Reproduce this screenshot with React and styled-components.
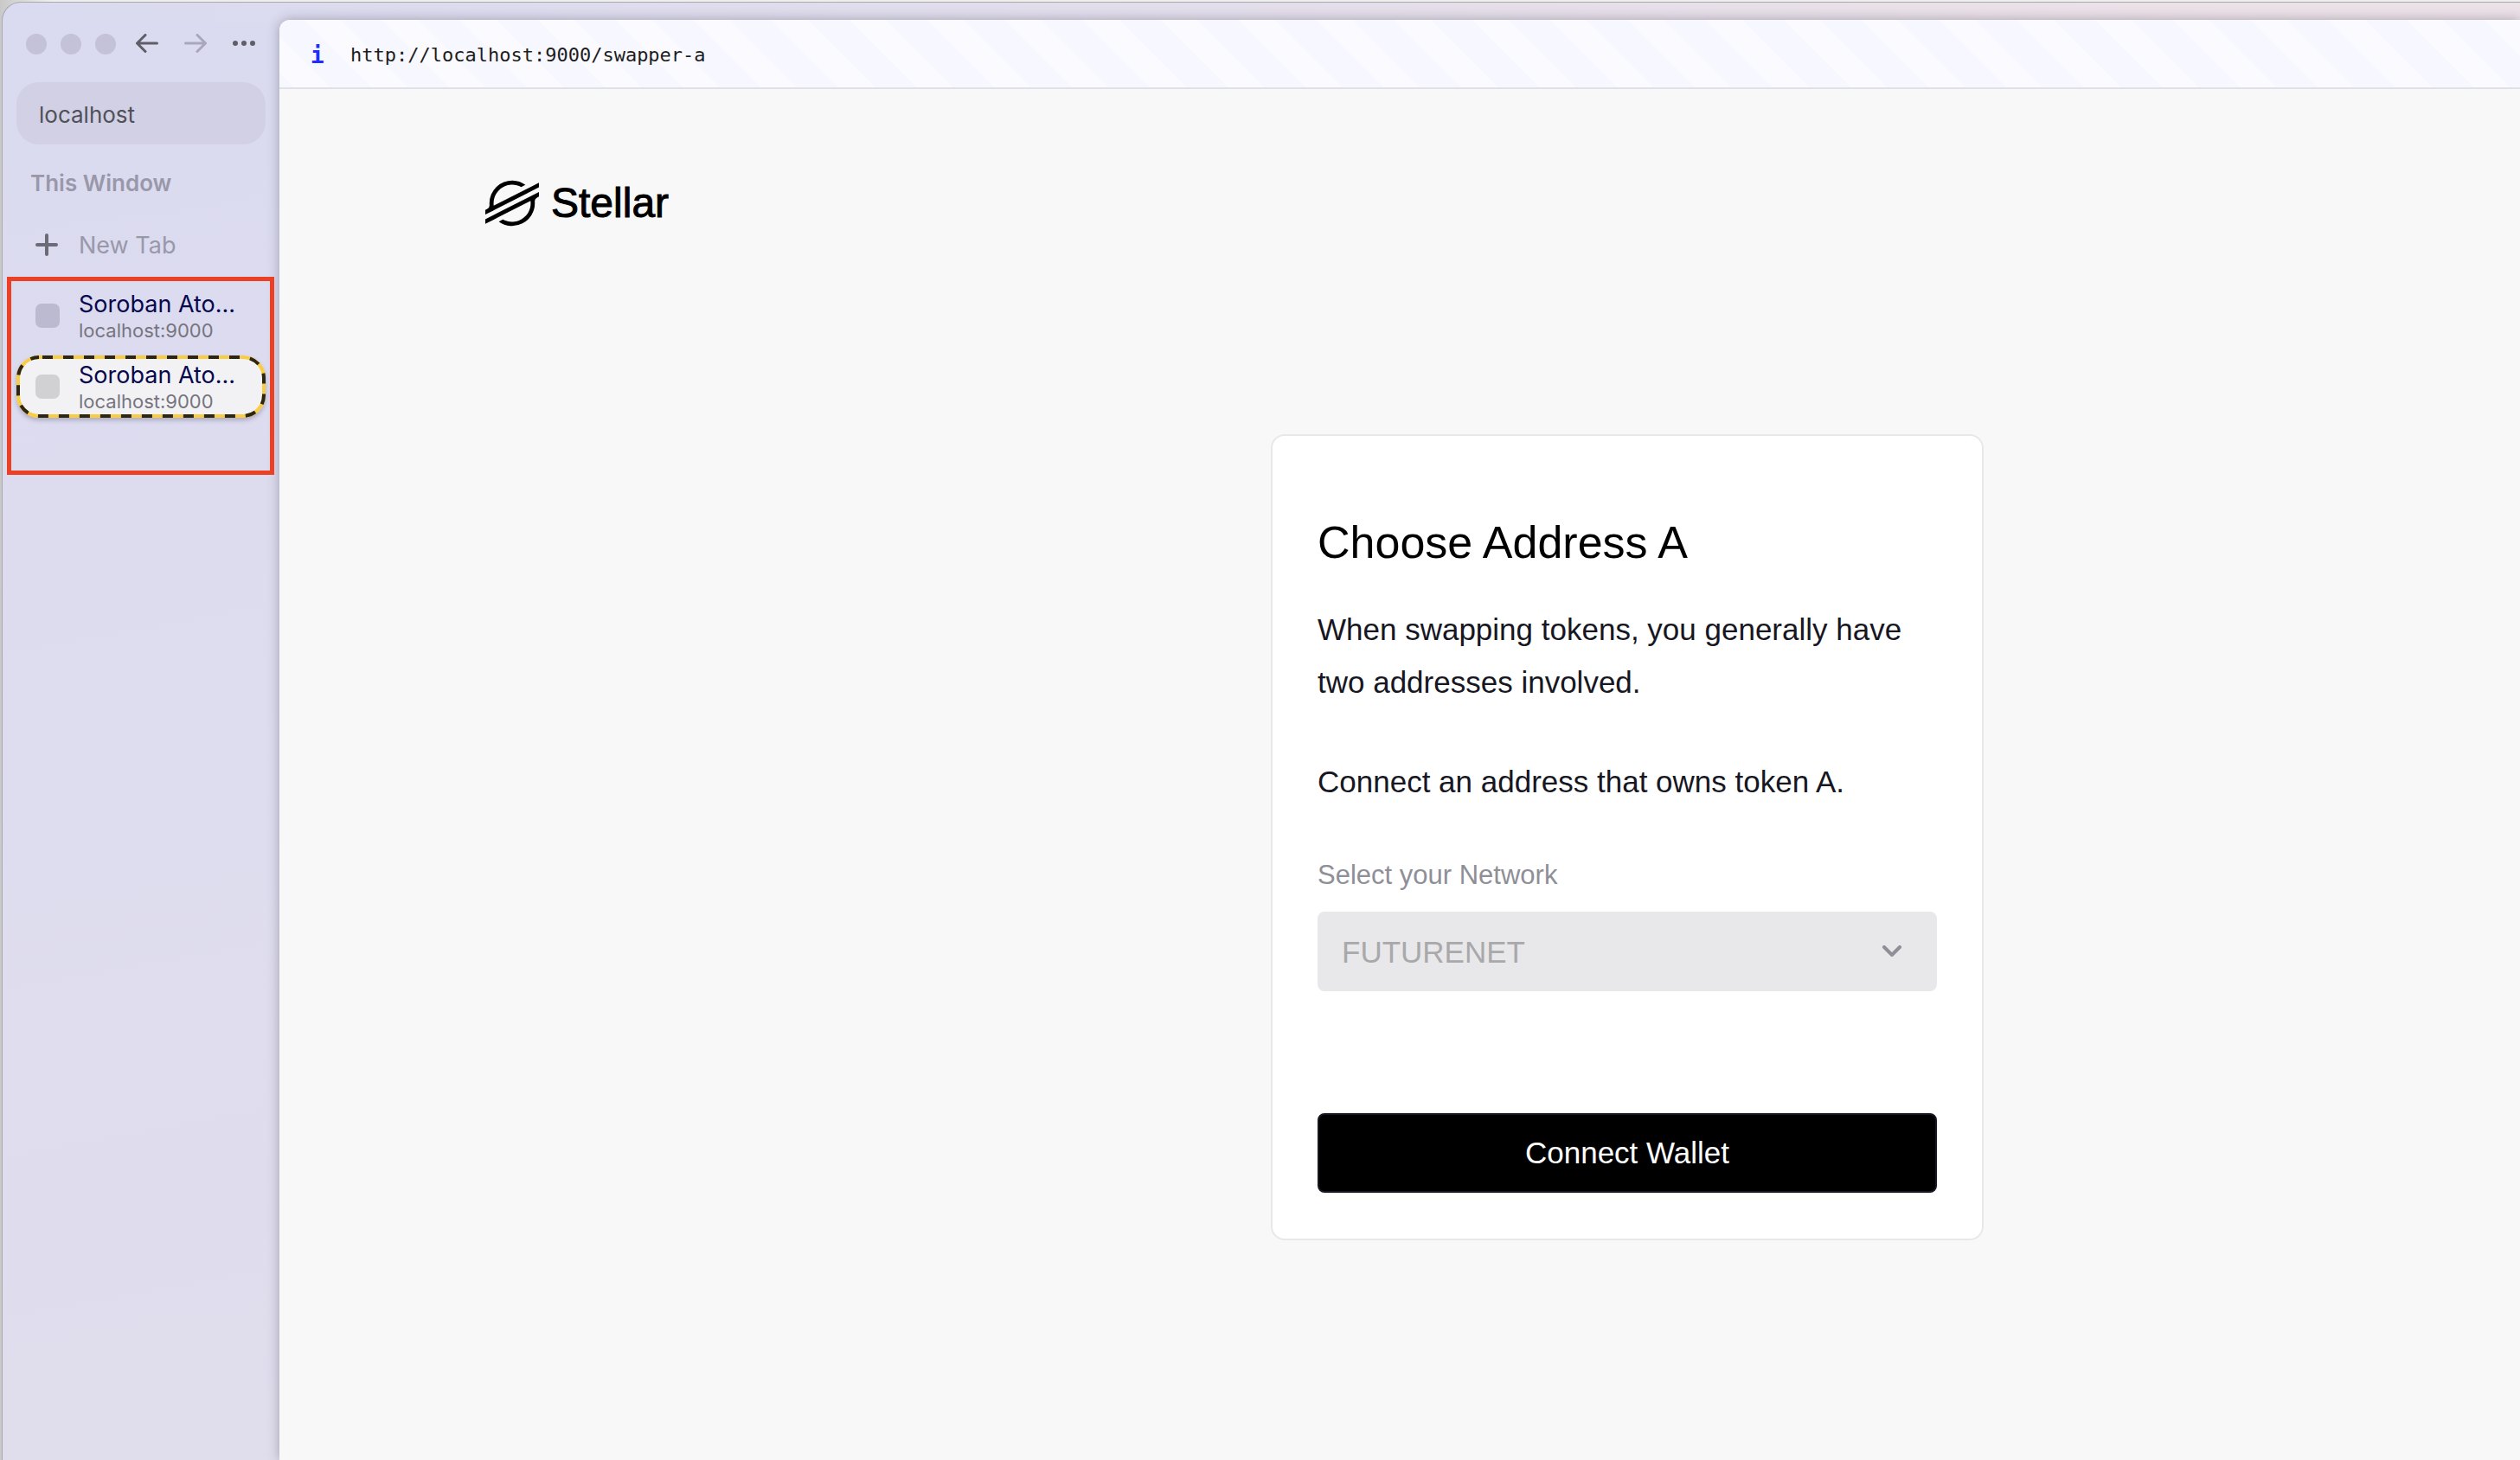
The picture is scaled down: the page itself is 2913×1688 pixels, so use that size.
import React from "react";
import styled, { createGlobalStyle } from "styled-components";

const sans = `"Liberation Sans", Arial, sans-serif`;
const ui = `Inter, "Liberation Sans", sans-serif`;
const mono = `"DejaVu Sans Mono", "Liberation Mono", monospace`;

const GlobalStyle = createGlobalStyle`
  *, *::before, *::after { box-sizing: border-box; }
  body {
    margin: 0;
    background: linear-gradient(90deg, #c9c9c9 0, #efefee 60px);
    font-family: ${sans};
  }
  h1, h2, p { margin: 0; font-weight: 400; }
  button, input, select { font: inherit; margin: 0; }
`;

const Desktop = styled.div`
  padding: 2px 0 0 2px;
`;

const Window = styled.div`
  display: flex;
  min-height: calc(100vh - 2px);
  border: 1px solid #a9a9ad;
  border-width: 1px 0 0 1px;
  border-top-left-radius: 22px;
  background:
    linear-gradient(90deg, #dadaf0 0, #dddcee 20%, #ece1e7 88%) top / 100% 24px no-repeat,
    linear-gradient(170deg, #dadaf0 0, #dddcef 30%, #e1deeb 100%);
  overflow: hidden;
`;

const Sidebar = styled.aside`
  flex: 0 0 320px;
  display: flex;
  flex-direction: column;
  padding: 36px 16px 0;
  font-family: ${ui};
`;

const Toolbar = styled.div`
  display: flex;
  align-items: center;
  height: 24px;
  padding-left: 11px;
`;

const Lights = styled.div`
  display: flex;
  gap: 16px;
  margin-right: 20px;
`;

const Light = styled.span`
  width: 24px;
  height: 24px;
  border-radius: 50%;
  background: #c3c2d8;
`;

const ToolButton = styled.button`
  display: flex;
  align-items: center;
  justify-content: center;
  width: 32px;
  height: 24px;
  margin-right: 24px;
  padding: 0 0 3px;
  border: 0;
  background: none;
  color: ${(p) => (p.$dim ? "#a9a7bb" : "#5f5e68")};
  &:last-child { margin-right: 0; }
`;

const AddressInput = styled.input`
  width: 100%;
  height: 72px;
  margin-top: 32px;
  padding: 2px 26px 0;
  border: 0;
  border-radius: 26px;
  outline: 0;
  background: #d1d0e5;
  color: #4f5058;
  font-size: 26px;
`;

const SectionTitle = styled.h2`
  margin: 29px 0 19px;
  padding-left: 16px;
  color: #9998aa;
  font-size: 26px;
  font-weight: 600;
  line-height: 32px;
`;

const TabList = styled.div`
  display: flex;
  flex-direction: column;
  gap: 10px;
`;

const Tab = styled.button`
  position: relative;
  display: flex;
  align-items: center;
  width: 100%;
  height: 72px;
  padding: 0 0 0 22px;
  border: 0;
  border-radius: 26px;
  background: ${(p) => (p.$active ? "#f2f2f5" : "none")};
  box-shadow: ${(p) => (p.$active ? "0 3px 5px rgba(60, 60, 90, 0.3)" : "none")};
  text-align: left;
`;

const TabIcon = styled.span`
  display: flex;
  width: 28px;
  height: 28px;
  margin-right: 22px;
  border-radius: 7px;
  background: ${(p) => p.$fill || "none"};
`;

const TabText = styled.span`
  display: flex;
  flex-direction: column;
  padding-top: 2px;
`;

const TabTitle = styled.span`
  color: ${(p) => (p.$dim ? "#9998aa" : "#07084d")};
  font-size: 27px;
  line-height: 32px;
  white-space: nowrap;
`;

const TabHost = styled.span`
  color: #76757f;
  font-size: 22px;
  line-height: 28px;
`;

const DashedOutline = styled.svg`
  position: absolute;
  inset: 0;
  width: 100%;
  height: 100%;
  rect {
    width: calc(100% - 4px);
    height: calc(100% - 4px);
  }
`;

const TabGroup = styled.div`
  position: relative;
  display: flex;
  flex-direction: column;
  gap: 10px;
`;

const Highlight = styled.div`
  position: absolute;
  inset: -9px -10px -66px -11px;
  border: 5px solid #ec4024;
  pointer-events: none;
`;

const Panel = styled.div`
  flex: 1;
  min-width: 0;
  margin-top: 20px;
  border-top-left-radius: 12px;
  background: #f8f8f8;
  box-shadow: 0 0 14px rgba(40, 40, 60, 0.34);
  overflow: hidden;
`;

const UrlBar = styled.div`
  display: flex;
  align-items: center;
  height: 80px;
  padding: 3px 0 0 36px;
  border-bottom: 2px solid #e0e0e8;
  background: linear-gradient(
      45deg,
      #fbfaff 0 23%,
      #f6f7ff 23% 50%,
      #fbfaff 50% 73%,
      #f6f7ff 73%
    )
    left 17px bottom 0 / 90px 90px;
  font-family: ${mono};
`;

const Info = styled.span`
  width: 46px;
  color: #1f2cff;
  font-size: 26px;
  font-weight: 700;
  line-height: 32px;
`;

const Url = styled.span`
  color: #1d1d20;
  font-size: 22px;
  line-height: 32px;
`;

const Header = styled.header`
  padding: 101px 238px 0;
`;

const Brand = styled.a`
  display: inline-flex;
  align-items: center;
  gap: 14px;
  color: #000;
  text-decoration: none;
  font-size: 48px;
  line-height: 62px;
  vertical-align: top;
  -webkit-text-stroke: 1px #000;
  svg { -webkit-text-stroke: 0; }
`;

const Content = styled.main`
  display: flex;
  justify-content: center;
  padding: 236px 0 120px 526px;
`;

const Card = styled.section`
  width: 824px;
  padding: 93px 52px 53px;
  border: 2px solid #e8e8e8;
  border-radius: 16px;
  background: #fff;
`;

const Title = styled.h1`
  margin-bottom: 40px;
  color: #000;
  font-size: 52px;
  line-height: 60px;
`;

const Text = styled.p`
  margin-bottom: 54px;
  color: #171723;
  font-size: 35px;
  line-height: 61px;
`;

const Label = styled.label`
  display: block;
  margin: 58px 0 22px;
  color: #8f8f98;
  font-size: 31px;
  line-height: 40px;
`;

const SelectBox = styled.div`
  display: grid;
  align-items: center;
  margin-bottom: 141px;
  > * { grid-area: 1 / 1; }
  svg {
    justify-self: end;
    margin-right: 40px;
    pointer-events: none;
  }
`;

const Select = styled.select`
  width: 100%;
  height: 92px;
  padding: 0 28px;
  border: 0;
  border-radius: 8px;
  appearance: none;
  background: #e8e8ea;
  color: #a9a9ab;
  font-size: 35px;
  opacity: 1;
`;

const Primary = styled.button`
  display: block;
  width: 100%;
  height: 92px;
  border: 2px solid #171723;
  border-radius: 8px;
  background: #000;
  color: #fff;
  font-size: 35px;
`;

const Arrow = ({ flip }) => (
  <svg width="26" height="22" viewBox="0 0 26 22" fill="none" stroke="currentColor" strokeWidth="3" strokeLinecap="round" strokeLinejoin="round">
    <path d={flip ? "M1.5 11H24.5M15 1.5L24.5 11L15 20.5" : "M24.5 11H1.5M11 1.5L1.5 11L11 20.5"} />
  </svg>
);

const StellarMark = () => (
  <svg width="62" height="62" viewBox="0 0 24 24" fill="currentColor" aria-hidden="true">
    <path d="M12.283 1.851A10.154 10.154 0 001.846 12.002c0 .259.01.516.03.773A1.847 1.847 0 01.872 14.56L0 15.005v2.074l2.568-1.309.832-.424.82-.417 14.71-7.496 1.653-.842L24 4.85V2.776l-3.387 1.728-2.89 1.473-13.955 7.108a8.376 8.376 0 01-.07-1.086 8.313 8.313 0 0112.366-7.247l1.654-.843.247-.126a10.154 10.154 0 00-5.682-1.932zM24 6.925L5.055 16.571l-1.653.844L0 19.15v2.072L3.378 19.5l2.89-1.473 13.97-7.117a8.474 8.474 0 01.07 1.092A8.313 8.313 0 017.93 19.248l-.101.054-1.793.914a10.154 10.154 0 0016.119-8.214c0-.26-.01-.522-.03-.78a1.848 1.848 0 011.003-1.785L24 8.992z" />
  </svg>
);

const tabs = [
  { id: 1, title: "Soroban Ato...", host: "localhost:9000", fill: "#bbbad0" },
  { id: 2, title: "Soroban Ato...", host: "localhost:9000", fill: "#d1d1d3", active: true },
];

export default function App() {
  return (
    <>
      <GlobalStyle />
      <Desktop>
        <Window>
          <Sidebar>
            <Toolbar>
              <Lights>
                <Light />
                <Light />
                <Light />
              </Lights>
              <ToolButton aria-label="Back">
                <Arrow />
              </ToolButton>
              <ToolButton $dim aria-label="Forward">
                <Arrow flip />
              </ToolButton>
              <ToolButton aria-label="More">
                <svg width="26" height="6" viewBox="0 0 26 6" fill="currentColor">
                  <circle cx="3" cy="3" r="3" />
                  <circle cx="13" cy="3" r="3" />
                  <circle cx="23" cy="3" r="3" />
                </svg>
              </ToolButton>
            </Toolbar>
            <AddressInput aria-label="Address" defaultValue="localhost" />
            <SectionTitle>This Window</SectionTitle>
            <TabList>
              <Tab>
                <TabIcon>
                  <svg width="26" height="28" viewBox="0 0 26 28" stroke="#6b6a77" strokeWidth="4" strokeLinecap="round">
                    <path d="M2 14H24M13 3V25" />
                  </svg>
                </TabIcon>
                <TabText>
                  <TabTitle $dim>New Tab</TabTitle>
                </TabText>
              </Tab>
              <TabGroup>
                {tabs.map((tab) => (
                  <Tab key={tab.id} $active={tab.active}>
                    {tab.active && (
                      <DashedOutline fill="none" strokeWidth="4" aria-hidden="true">
                        <rect x="2" y="2" rx="24" stroke="#f8cc45" />
                        <rect x="2" y="2" rx="24" stroke="#2e260f" strokeDasharray="12 12" strokeDashoffset="-4" />
                      </DashedOutline>
                    )}
                    <TabIcon $fill={tab.fill} />
                    <TabText>
                      <TabTitle>{tab.title}</TabTitle>
                      <TabHost>{tab.host}</TabHost>
                    </TabText>
                  </Tab>
                ))}
                <Highlight />
              </TabGroup>
            </TabList>
          </Sidebar>
          <Panel>
            <UrlBar>
              <Info>i</Info>
              <Url>http://localhost:9000/swapper-a</Url>
            </UrlBar>
            <Header>
              <Brand href="#">
                <StellarMark />
                Stellar
              </Brand>
            </Header>
            <Content>
              <Card>
                <Title>Choose Address A</Title>
                <Text>When swapping tokens, you generally have two addresses involved.</Text>
                <Text>Connect an address that owns token A.</Text>
                <Label htmlFor="network">Select your Network</Label>
                <SelectBox>
                  <Select id="network" disabled defaultValue="FUTURENET">
                    <option>FUTURENET</option>
                  </Select>
                  <svg width="24" height="14" viewBox="0 0 24 14" fill="none" stroke="#8f8f98" strokeWidth="4" strokeLinecap="round" strokeLinejoin="round">
                    <path d="M3 2L12 11L21 2" />
                  </svg>
                </SelectBox>
                <Primary>Connect Wallet</Primary>
              </Card>
            </Content>
          </Panel>
        </Window>
      </Desktop>
    </>
  );
}
